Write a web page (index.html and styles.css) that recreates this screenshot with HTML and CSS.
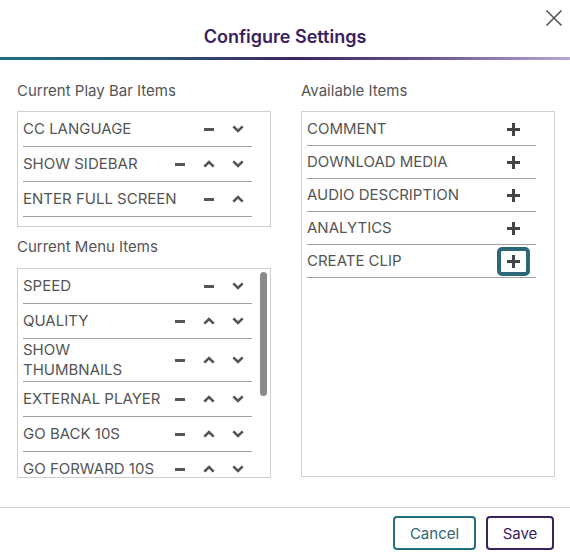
FILE: index.html
```html
<!DOCTYPE html>
<html lang="en">
<head>
<meta charset="utf-8">
<title>Configure Settings</title>
<link rel="stylesheet" href="styles.css">
</head>
<body>
<div class="dialog">
  <header class="header">
    <h1 class="title">Configure Settings</h1>
    <button class="close" aria-label="Close">
      <svg width="18" height="18" viewBox="0 0 18 18"><path d="M1.5 1.5 L16.5 16.5 M16.5 1.5 L1.5 16.5" stroke="#555" stroke-width="1.6" fill="none"/></svg>
    </button>
  </header>
  <div class="accent"></div>
  <main class="body">
    <section class="col">
      <h2 class="label">Current Play Bar Items</h2>
      <ul class="list list-playbar">
        <li class="item"><span class="name">CC LANGUAGE</span><span class="actions">
          <button class="act" aria-label="Remove"><svg width="10" height="3" viewBox="0 0 10 3"><rect width="10" height="3" fill="#555"/></svg></button>
          <button class="act" aria-label="Move down"><svg width="12" height="8" viewBox="0 0 12 8"><path d="M1.3 1.3 L6 6 L10.7 1.3" stroke="#555" stroke-width="2.6" fill="none"/></svg></button>
        </span></li>
        <li class="item"><span class="name">SHOW SIDEBAR</span><span class="actions">
          <button class="act" aria-label="Remove"><svg width="10" height="3" viewBox="0 0 10 3"><rect width="10" height="3" fill="#555"/></svg></button>
          <button class="act" aria-label="Move up"><svg width="12" height="8" viewBox="0 0 12 8"><path d="M1.3 6.7 L6 2 L10.7 6.7" stroke="#555" stroke-width="2.6" fill="none"/></svg></button>
          <button class="act" aria-label="Move down"><svg width="12" height="8" viewBox="0 0 12 8"><path d="M1.3 1.3 L6 6 L10.7 1.3" stroke="#555" stroke-width="2.6" fill="none"/></svg></button>
        </span></li>
        <li class="item"><span class="name">ENTER FULL SCREEN</span><span class="actions">
          <button class="act" aria-label="Remove"><svg width="10" height="3" viewBox="0 0 10 3"><rect width="10" height="3" fill="#555"/></svg></button>
          <button class="act" aria-label="Move up"><svg width="12" height="8" viewBox="0 0 12 8"><path d="M1.3 6.7 L6 2 L10.7 6.7" stroke="#555" stroke-width="2.6" fill="none"/></svg></button>
        </span></li>
      </ul>
      <h2 class="label label-menu">Current Menu Items</h2>
      <div class="menu-box">
        <ul class="menu-list">
          <li class="item"><span class="name">SPEED</span><span class="actions">
            <button class="act"><svg width="10" height="3" viewBox="0 0 10 3"><rect width="10" height="3" fill="#555"/></svg></button>
            <button class="act"><svg width="12" height="8" viewBox="0 0 12 8"><path d="M1.3 1.3 L6 6 L10.7 1.3" stroke="#555" stroke-width="2.6" fill="none"/></svg></button>
          </span></li>
          <li class="item"><span class="name">QUALITY</span><span class="actions">
            <button class="act"><svg width="10" height="3" viewBox="0 0 10 3"><rect width="10" height="3" fill="#555"/></svg></button>
            <button class="act"><svg width="12" height="8" viewBox="0 0 12 8"><path d="M1.3 6.7 L6 2 L10.7 6.7" stroke="#555" stroke-width="2.6" fill="none"/></svg></button>
            <button class="act"><svg width="12" height="8" viewBox="0 0 12 8"><path d="M1.3 1.3 L6 6 L10.7 1.3" stroke="#555" stroke-width="2.6" fill="none"/></svg></button>
          </span></li>
          <li class="item"><span class="name">SHOW THUMBNAILS</span><span class="actions">
            <button class="act"><svg width="10" height="3" viewBox="0 0 10 3"><rect width="10" height="3" fill="#555"/></svg></button>
            <button class="act"><svg width="12" height="8" viewBox="0 0 12 8"><path d="M1.3 6.7 L6 2 L10.7 6.7" stroke="#555" stroke-width="2.6" fill="none"/></svg></button>
            <button class="act"><svg width="12" height="8" viewBox="0 0 12 8"><path d="M1.3 1.3 L6 6 L10.7 1.3" stroke="#555" stroke-width="2.6" fill="none"/></svg></button>
          </span></li>
          <li class="item"><span class="name">EXTERNAL PLAYER</span><span class="actions">
            <button class="act"><svg width="10" height="3" viewBox="0 0 10 3"><rect width="10" height="3" fill="#555"/></svg></button>
            <button class="act"><svg width="12" height="8" viewBox="0 0 12 8"><path d="M1.3 6.7 L6 2 L10.7 6.7" stroke="#555" stroke-width="2.6" fill="none"/></svg></button>
            <button class="act"><svg width="12" height="8" viewBox="0 0 12 8"><path d="M1.3 1.3 L6 6 L10.7 1.3" stroke="#555" stroke-width="2.6" fill="none"/></svg></button>
          </span></li>
          <li class="item"><span class="name">GO BACK 10S</span><span class="actions">
            <button class="act"><svg width="10" height="3" viewBox="0 0 10 3"><rect width="10" height="3" fill="#555"/></svg></button>
            <button class="act"><svg width="12" height="8" viewBox="0 0 12 8"><path d="M1.3 6.7 L6 2 L10.7 6.7" stroke="#555" stroke-width="2.6" fill="none"/></svg></button>
            <button class="act"><svg width="12" height="8" viewBox="0 0 12 8"><path d="M1.3 1.3 L6 6 L10.7 1.3" stroke="#555" stroke-width="2.6" fill="none"/></svg></button>
          </span></li>
          <li class="item"><span class="name">GO FORWARD 10S</span><span class="actions">
            <button class="act"><svg width="10" height="3" viewBox="0 0 10 3"><rect width="10" height="3" fill="#555"/></svg></button>
            <button class="act"><svg width="12" height="8" viewBox="0 0 12 8"><path d="M1.3 6.7 L6 2 L10.7 6.7" stroke="#555" stroke-width="2.6" fill="none"/></svg></button>
            <button class="act"><svg width="12" height="8" viewBox="0 0 12 8"><path d="M1.3 1.3 L6 6 L10.7 1.3" stroke="#555" stroke-width="2.6" fill="none"/></svg></button>
          </span></li>
        </ul>
        <div class="scrolltrack"><div class="thumb"></div></div>
      </div>
    </section>
    <section class="col">
      <h2 class="label">Available Items</h2>
      <ul class="list list-available">
        <li class="item item-avail"><span class="name">COMMENT</span><button class="add" aria-label="Add"><svg width="13" height="13" viewBox="0 0 13 13"><path d="M6.5 0 V13 M0 6.5 H13" stroke="#444" stroke-width="3" fill="none"/></svg></button></li>
        <li class="item item-avail"><span class="name">DOWNLOAD MEDIA</span><button class="add" aria-label="Add"><svg width="13" height="13" viewBox="0 0 13 13"><path d="M6.5 0 V13 M0 6.5 H13" stroke="#444" stroke-width="3" fill="none"/></svg></button></li>
        <li class="item item-avail"><span class="name">AUDIO DESCRIPTION</span><button class="add" aria-label="Add"><svg width="13" height="13" viewBox="0 0 13 13"><path d="M6.5 0 V13 M0 6.5 H13" stroke="#444" stroke-width="3" fill="none"/></svg></button></li>
        <li class="item item-avail"><span class="name">ANALYTICS</span><button class="add" aria-label="Add"><svg width="13" height="13" viewBox="0 0 13 13"><path d="M6.5 0 V13 M0 6.5 H13" stroke="#444" stroke-width="3" fill="none"/></svg></button></li>
        <li class="item item-avail"><span class="name">CREATE CLIP</span><button class="add add-focus" aria-label="Add"><svg width="13" height="13" viewBox="0 0 13 13"><path d="M6.5 0 V13 M0 6.5 H13" stroke="#444" stroke-width="3" fill="none"/></svg></button></li>
      </ul>
    </section>
  </main>
  <footer class="footer">
    <button class="btn btn-cancel">Cancel</button>
    <button class="btn btn-save">Save</button>
  </footer>
</div>
</body>
</html>
```

FILE: styles.css
```css
* { box-sizing: border-box; }
html, body { margin: 0; padding: 0; background: #fff; }
body {
  font-family: Inter, "Liberation Sans", sans-serif;
  color: #555;
  width: 570px;
  height: 552px;
  overflow: hidden;
}
button { font-family: inherit; cursor: pointer; }

.dialog { display: flex; flex-direction: column; height: 552px; }

.header {
  position: relative;
  height: 57px;
  display: flex;
  align-items: flex-end;
  justify-content: center;
  padding-bottom: 9px;
}
.title {
  margin: 0;
  font-size: 18px;
  line-height: 22px;
  font-weight: 600;
  color: #3a215f;
}
.close {
  position: absolute;
  top: 9px;
  right: 7px;
  width: 18px;
  height: 18px;
  padding: 0;
  border: 0;
  background: none;
  display: flex;
}

.accent {
  height: 3px;
  background: linear-gradient(90deg, #1f6f80 0%, #2a5578 28%, #3e2465 52%, #6b5290 75%, #b9a8cf 100%);
}

.body {
  display: grid;
  grid-template-columns: 254px 254px;
  column-gap: 30px;
  padding: 21px 15px 0 17px;
  height: 448px;
  border-bottom: 1px solid #d0d0d0;
}
.col { display: flex; flex-direction: column; }

.label {
  margin: 0 0 10px;
  font-size: 15px;
  line-height: 20px;
  font-weight: 400;
  color: #555;
}
.label-menu { margin-top: 10px; margin-bottom: 11px; }

.list {
  list-style: none;
  margin: 0;
  border: 1px solid #d0d0d0;
}
.list-playbar { padding: 0 18px 9px 5px; }
.list-available { height: 366px; padding: 1px 18px 0 5px; }

.menu-box {
  display: flex;
  height: 210px;
  border: 1px solid #d0d0d0;
  overflow: hidden;
}
.menu-list {
  flex: 1;
  min-width: 0;
  list-style: none;
  margin: 0;
  padding: 0 6px 0 5px;
  overflow: hidden;
}
.scrolltrack {
  flex: none;
  width: 12px;
  padding: 3px 2px 3px 2px;
}
.thumb {
  width: 7px;
  height: 124px;
  border-radius: 4px;
  background: #8a8a8a;
}

.item {
  display: flex;
  align-items: center;
  justify-content: space-between;
  min-height: 35px;
  padding: 1px 0;
  border-bottom: 1px solid #a0a0a0;
  font-size: 15px;
  line-height: 20px;
  color: #555;
}
.item-avail { min-height: 33px; padding: 0; }
.name { flex: 1; min-width: 0; }

.actions { display: flex; flex: none; }
.act {
  width: 29px;
  height: 26px;
  padding: 0;
  border: 0;
  background: none;
  display: flex;
  align-items: center;
  justify-content: center;
}

.add {
  width: 33px;
  height: 29px;
  margin-right: 6px;
  padding: 0;
  border: 4px solid transparent;
  border-radius: 5px;
  background: none;
  display: flex;
  align-items: center;
  justify-content: center;
}
.add-focus { border-color: #2c6679; }

.footer {
  display: flex;
  justify-content: flex-end;
  gap: 10px;
  padding: 8px 16px 0 0;
}
.btn {
  height: 34px;
  padding: 0 14px;
  background: #fff;
  border-radius: 4px;
  font-size: 15px;
  border: 2px solid;
}
.btn-cancel { width: 83px; border-color: #236f80; color: #2f6477; }
.btn-save { width: 68px; border-color: #3a215f; color: #3a215f; }
```
